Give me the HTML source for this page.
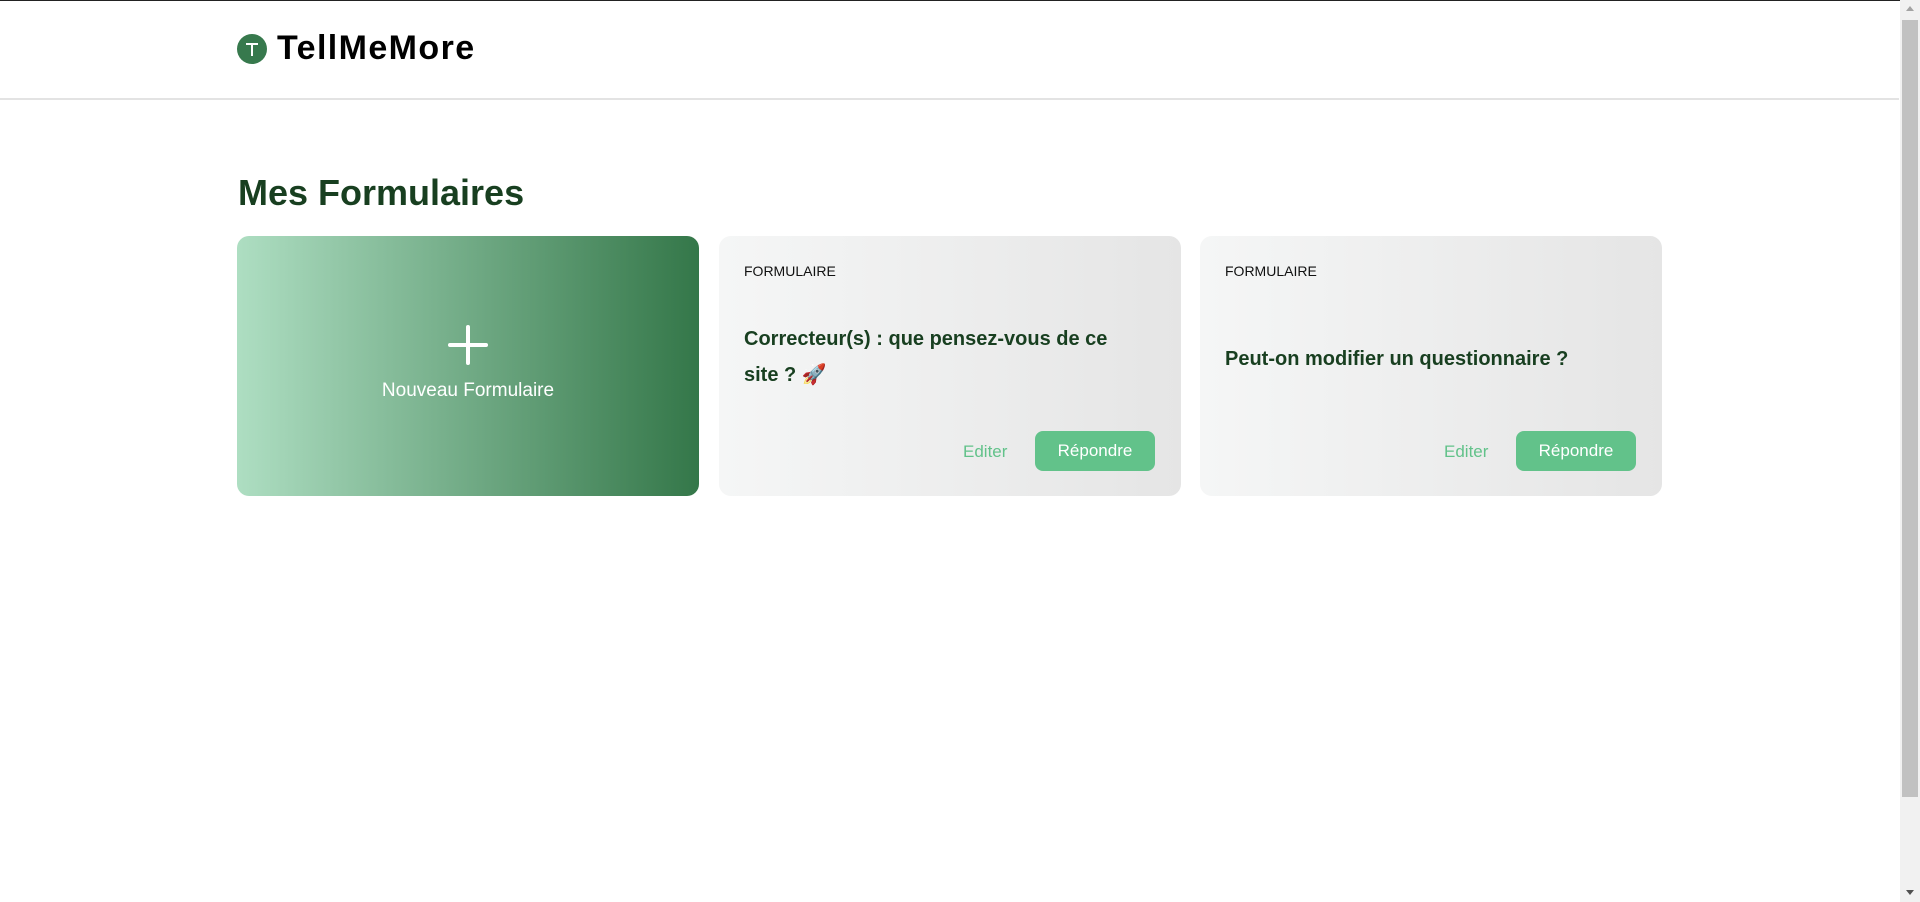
<!DOCTYPE html>
<html><head><meta charset="utf-8"><style>
*{margin:0;padding:0;box-sizing:border-box}
html,body{width:1920px;height:902px;overflow:hidden;background:#fff;font-family:"Liberation Sans",sans-serif}
.top{position:absolute;left:0;top:0;width:1900px;height:1px;background:#222}
.hdr{position:absolute;left:0;top:1px;width:1899px;height:99px;border-bottom:2px solid #e3e3e3}
.logo{position:absolute;left:237px;top:33px;width:30px;height:30px;border-radius:50%;background:#37794d}
.logo:before{content:"";position:absolute;left:9px;top:9px;width:12px;height:2px;background:#fff}
.logo:after{content:"";position:absolute;left:14px;top:9px;width:2px;height:13px;background:#fff}
.brand{position:absolute;left:277px;top:28px;font-size:34px;font-weight:bold;color:#000;letter-spacing:1.4px}
h1{position:absolute;left:238px;top:172px;font-size:36px;color:#183f20;font-weight:bold}
.card{position:absolute;top:236px;width:462px;height:260px;border-radius:12px}
.new{left:237px;background:linear-gradient(90deg,#aedec2,#347749);color:#fff}
.plus{position:absolute;left:211px;top:89px;width:40px;height:40px}
.plus:before{content:"";position:absolute;left:18px;top:0;width:4px;height:40px;background:#fff;border-radius:2px}
.plus:after{content:"";position:absolute;top:18px;left:0;height:4px;width:40px;background:#fff;border-radius:2px}
.nl{position:absolute;left:0;width:100%;top:144px;text-align:center;font-size:19px}
.f{background:linear-gradient(90deg,#f5f6f6,#e5e5e5)}
.lab{position:absolute;left:25px;top:27px;font-size:14px;color:#111}
.t{position:absolute;left:25px;width:400px;font-size:20px;font-weight:bold;color:#183f20;line-height:36px}
.ed{position:absolute;left:244px;top:206px;font-size:17px;color:#62c28a}
.btn{position:absolute;left:316px;top:195px;width:120px;height:40px;border-radius:8px;background:#62c28a;color:#fff;font-size:17px;text-align:center;line-height:40px}
.sb{position:absolute;right:0;top:0;width:20px;height:902px;background:#f1f1f1}
.th{position:absolute;left:2px;top:20px;width:16px;height:777px;background:#c1c1c1}
.ar{position:absolute;left:6px;width:0;height:0;border-left:4px solid transparent;border-right:4px solid transparent}
</style></head><body>
<div class="top"></div>
<div class="hdr"><div class="logo"></div><div class="brand">TellMeMore</div></div>
<h1>Mes Formulaires</h1>
<div class="card new"><div class="plus"></div><div class="nl">Nouveau Formulaire</div></div>
<div class="card f" style="left:719px"><div class="lab">FORMULAIRE</div><div class="t" style="top:85px">Correcteur(s) : que pensez-vous de ce site ? 🚀</div><div class="ed">Editer</div><div class="btn">Répondre</div></div>
<div class="card f" style="left:1200px"><div class="lab">FORMULAIRE</div><div class="t" style="top:105px">Peut-on modifier un questionnaire ?</div><div class="ed">Editer</div><div class="btn">Répondre</div></div>
<div class="sb"><div class="ar" style="top:6px;border-bottom:5px solid #a3a3a3"></div><div class="th"></div><div class="ar" style="top:890px;border-top:5px solid #505050"></div></div>
</body></html>
